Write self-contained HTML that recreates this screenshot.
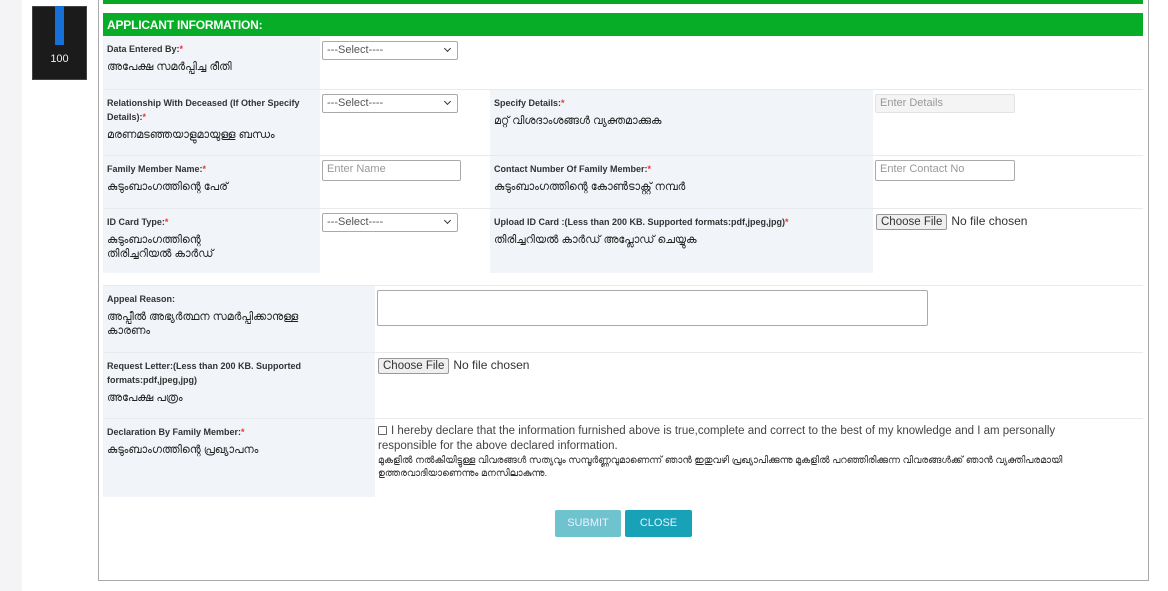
<!DOCTYPE html>
<html><head><meta charset="utf-8"><style>
*{box-sizing:border-box;margin:0;padding:0}
body{width:1168px;height:591px;background:#fff;position:relative;overflow:hidden;font-family:"Liberation Sans","Noto Sans CJK JP",sans-serif;color:#222}
.a{position:absolute}
.lab{position:absolute;background:#f1f4f8;padding:6px 4px 0 4px}
.en{font-size:9px;font-weight:bold;color:#333;line-height:14px}
.en i{color:#e33;font-style:normal}
.ml{font-size:11px;color:#222;line-height:14px;margin-top:4px}
.sel,.inp{position:absolute;border:1px solid #aaa;border-radius:2px;background:#fff;font-size:11px;color:#555;padding:2px 4px;height:19px}
.sel:after{content:"";position:absolute;right:7px;top:4px;width:4px;height:4px;border-right:1.5px solid #333;border-bottom:1.5px solid #333;transform:rotate(45deg)}
.inp{color:#999}
.line{position:absolute;height:1px;background:#e8ebee}
.file{position:absolute;font-size:12px;color:#333;white-space:nowrap}
.file span{display:inline-block;border:1px solid #999;background:#efefef;border-radius:2px;padding:1px 4px;margin-right:4px;font-size:11.5px}
</style></head><body>
<div class="a" style="left:0;top:0;width:22px;height:591px;background:#f4f4f6"></div>
<div class="a" style="left:32px;top:6px;width:55px;height:74px;background:#1b1b1b;border:1px solid #444"></div>
<div class="a" style="left:55px;top:6px;width:9px;height:39px;background:#1570d8"></div>
<div class="a" style="left:32px;top:53px;width:55px;text-align:center;color:#eee;font-size:11px">100</div>

<div class="a" style="left:98px;top:0;width:1051px;height:581px;border:1px solid #aaa;border-top:none"></div>
<div class="a" style="left:103px;top:0;width:1040px;height:4px;background:#07a823"></div>
<div class="a" style="left:103px;top:13px;width:1040px;height:23px;background:#07ad26;color:#fff;font-weight:bold;font-size:12px;padding:5px 4px;letter-spacing:-0.2px">APPLICANT INFORMATION:</div>

<!-- row1 -->
<div class="lab" style="left:103px;top:36px;width:217px;height:53px"><div class="en">Data Entered By:<i>*</i></div><div class="ml">അപേക്ഷ സമർപ്പിച്ച രീതി</div></div>
<div class="sel" style="left:322px;top:41px;width:136px">---Select----</div>
<div class="line" style="left:103px;top:89px;width:1040px"></div>
<!-- row2 -->
<div class="lab" style="left:103px;top:90px;width:217px;height:65px"><div class="en">Relationship With Deceased (If Other Specify Details):<i>*</i></div><div class="ml">മരണമടഞ്ഞയാളുമായുള്ള ബന്ധം</div></div>
<div class="sel" style="left:322px;top:94px;width:136px">---Select----</div>
<div class="lab" style="left:490px;top:90px;width:383px;height:65px"><div class="en">Specify Details:<i>*</i></div><div class="ml">മറ്റ് വിശദാംശങ്ങൾ വ്യക്തമാക്കുക</div></div>
<div class="inp" style="left:875px;top:94px;width:140px;background:#f4f4f4;border-color:#e2e2e2">Enter Details</div>
<div class="line" style="left:103px;top:155px;width:1040px"></div>
<!-- row3 -->
<div class="lab" style="left:103px;top:156px;width:217px;height:52px"><div class="en">Family Member Name:<i>*</i></div><div class="ml">കുടുംബാംഗത്തിന്റെ പേര്</div></div>
<div class="inp" style="left:322px;top:160px;width:139px;height:21px">Enter Name</div>
<div class="lab" style="left:490px;top:156px;width:383px;height:52px"><div class="en">Contact Number Of Family Member:<i>*</i></div><div class="ml">കുടുംബാംഗത്തിന്റെ കോൺടാക്റ്റ് നമ്പർ</div></div>
<div class="inp" style="left:875px;top:160px;width:140px;height:21px">Enter Contact No</div>
<div class="line" style="left:103px;top:208px;width:1040px"></div>
<!-- row4 -->
<div class="lab" style="left:103px;top:209px;width:217px;height:64px"><div class="en">ID Card Type:<i>*</i></div><div class="ml">കുടുംബാംഗത്തിന്റെ<br>തിരിച്ചറിയൽ കാർഡ്</div></div>
<div class="sel" style="left:322px;top:213px;width:136px">---Select----</div>
<div class="lab" style="left:490px;top:209px;width:383px;height:64px"><div class="en">Upload ID Card :(Less than 200 KB. Supported formats:pdf,jpeg,jpg)<i>*</i></div><div class="ml">തിരിച്ചറിയൽ കാർഡ് അപ്ലോഡ് ചെയ്യുക</div></div>
<div class="file" style="left:876px;top:214px"><span>Choose File</span>No file chosen</div>

<!-- row5 -->
<div class="line" style="left:103px;top:285px;width:1040px"></div>
<div class="lab" style="left:103px;top:286px;width:272px;height:66px"><div class="en">Appeal Reason:</div><div class="ml">അപ്പീൽ അഭ്യർത്ഥന സമർപ്പിക്കാനുള്ള<br>കാരണം</div></div>
<div class="a" style="left:377px;top:290px;width:551px;height:36px;border:1px solid #aaa;border-radius:2px"></div>
<div class="line" style="left:103px;top:352px;width:1040px"></div>
<!-- row6 -->
<div class="lab" style="left:103px;top:353px;width:272px;height:65px"><div class="en">Request Letter:(Less than 200 KB. Supported formats:pdf,jpeg,jpg)</div><div class="ml">അപേക്ഷ പത്രം</div></div>
<div class="file" style="left:378px;top:358px"><span>Choose File</span>No file chosen</div>
<div class="line" style="left:103px;top:418px;width:1040px"></div>
<!-- row7 -->
<div class="lab" style="left:103px;top:419px;width:272px;height:78px"><div class="en">Declaration By Family Member:<i>*</i></div><div class="ml">കുടുംബാംഗത്തിന്റെ പ്രഖ്യാപനം</div></div>
<div class="a" style="left:378px;top:424px;width:715px;font-size:11.5px;color:#444;line-height:15px"><span style="display:inline-block;width:9px;height:9px;border:1px solid #666;border-radius:1px;margin-right:4px;vertical-align:-1px"></span>I hereby declare that the information furnished above is true,complete and correct to the best of my knowledge and I am personally responsible for the above declared information.<div style="font-size:9.5px;line-height:13px;color:#333;width:740px">മുകളിൽ നൽകിയിട്ടുള്ള വിവരങ്ങൾ സത്യവും സമ്പൂർണ്ണവുമാണെന്ന് ഞാൻ ഇതുവഴി പ്രഖ്യാപിക്കുന്നു മുകളിൽ പറഞ്ഞിരിക്കുന്ന വിവരങ്ങൾക്ക് ഞാൻ വ്യക്തിപരമായി ഉത്തരവാദിയാണെന്നും മനസിലാകുന്നു.</div></div>

<div class="a" style="left:555px;top:510px;width:66px;height:27px;background:#6ec3cf;color:#eef;font-size:11px;text-align:center;line-height:27px;border-radius:2px">SUBMIT</div>
<div class="a" style="left:625px;top:510px;width:67px;height:27px;background:#17a2b8;color:#eef;font-size:11px;text-align:center;line-height:27px;border-radius:2px">CLOSE</div>
</body></html>
